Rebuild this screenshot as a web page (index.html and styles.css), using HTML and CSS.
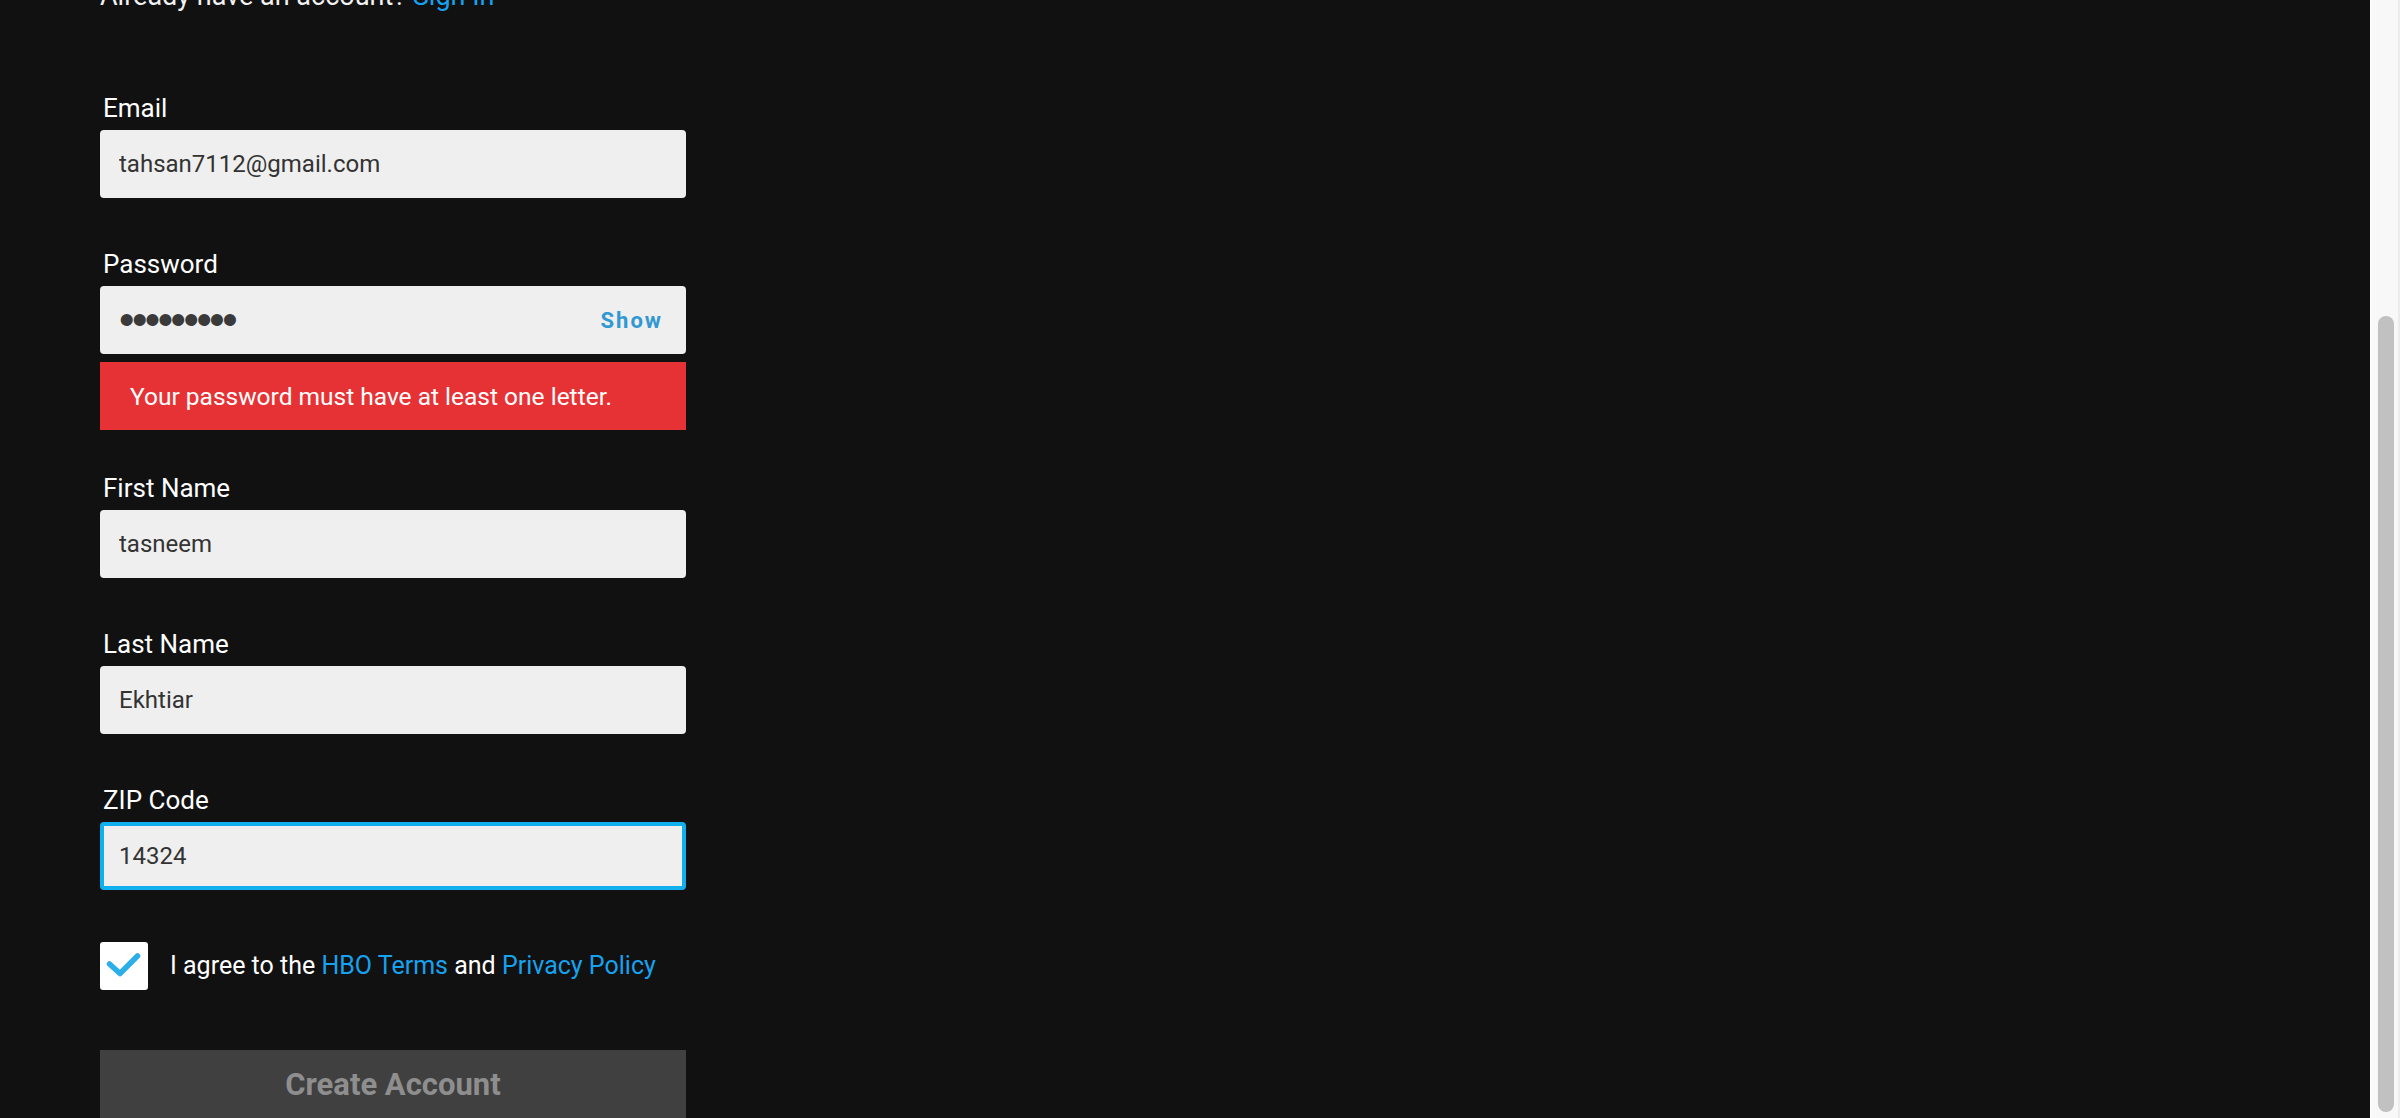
FILE: index.html
```html
<!DOCTYPE html>
<html lang="en">
<head>
<meta charset="utf-8">
<title>Create Your Account</title>
<link rel="stylesheet" href="styles.css">
</head>
<body>
<main class="page">
  <header class="intro">
    <h1 class="title">Create Your Account</h1>
    <p class="signin">Already have an account? <a href="#" class="link">Sign In</a></p>
  </header>
  <form class="form">
    <div class="field">
      <label class="label" for="email">Email</label>
      <input class="input" id="email" type="email" value="tahsan7112@gmail.com">
    </div>
    <div class="field field-error">
      <label class="label" for="password">Password</label>
      <div class="input-box">
        <input class="input input-password" id="password" type="password" value="123456789">
        <button type="button" class="show">Show</button>
      </div>
      <div class="error">Your password must have at least one letter.</div>
    </div>
    <div class="field">
      <label class="label" for="first">First Name</label>
      <input class="input" id="first" type="text" value="tasneem">
    </div>
    <div class="field">
      <label class="label" for="last">Last Name</label>
      <input class="input" id="last" type="text" value="Ekhtiar">
    </div>
    <div class="field field-zip">
      <label class="label" for="zip">ZIP Code</label>
      <input class="input input-focus" id="zip" type="text" value="14324">
    </div>
    <div class="agree">
      <span class="checkbox">
        <svg class="check" viewBox="0 0 48 48" width="48" height="48" aria-hidden="true">
          <path d="M9.5 22 L20 31.5 L37.5 14" fill="none" stroke="#2caeea" stroke-width="5.5" stroke-linecap="round" stroke-linejoin="round"/>
        </svg>
      </span>
      <span class="agree-text">I agree to the <a href="#" class="link">HBO Terms</a> and <a href="#" class="link">Privacy Policy</a></span>
    </div>
    <button class="submit" type="submit" disabled>Create Account</button>
  </form>
</main>
<div class="scrollbar" aria-hidden="true"><div class="scrollbar-thumb"></div></div>
<script src="script.js"></script>
</body>
</html>
```

FILE: styles.css
```css
html {
  background: #111111;
  scrollbar-width: none;
}

html::-webkit-scrollbar {
  display: none;
}

body {
  margin: 0;
  font-family: Roboto, "Liberation Sans", sans-serif;
  color: #ffffff;
}

.scrollbar {
  position: fixed;
  top: 0;
  right: 0;
  bottom: 0;
  width: 30px;
  box-sizing: border-box;
  border-left: 2px solid #fdfdfd;
  border-right: 2px solid #ececec;
  background: #f8f8f8;
}

.scrollbar-thumb {
  position: absolute;
  top: 316px;
  left: 6px;
  width: 16px;
  height: 796px;
  border-radius: 8px;
  background: #c1c1c1;
}

.page {
  width: 586px;
  padding-left: 100px;
}

.intro {
  padding-top: 200px;
}

.title {
  margin: 0 0 145px;
  font-size: 56px;
  line-height: 64px;
  font-weight: 700;
}

.signin {
  margin: 0 0 80px;
  font-size: 27px;
  line-height: 32px;
  color: #f2f2f2;
}

.link {
  color: #17a2ef;
  text-decoration: none;
}

.form {
  display: flex;
  flex-direction: column;
}

.field {
  display: flex;
  flex-direction: column;
  gap: 6px;
  margin-bottom: 50px;
}

.field-error {
  margin-bottom: 42px;
}

.field-zip {
  margin-bottom: 52px;
}

.label {
  padding-left: 3px;
  font-size: 26px;
  line-height: 32px;
  color: #ffffff;
}

.input {
  box-sizing: border-box;
  width: 100%;
  height: 68px;
  margin: 0;
  padding: 0 19px;
  border: 0;
  border-radius: 4px;
  background: #efefef;
  font-family: Roboto, "Liberation Sans", sans-serif;
  font-size: 24px;
  color: #333333;
  outline: none;
}

.input-focus {
  border: 4px solid #10b0ee;
  padding-left: 15px;
}

.input-box {
  display: flex;
  align-items: center;
  height: 68px;
  border-radius: 4px;
  background: #efefef;
}

.input-password {
  flex: 1;
  min-width: 0;
  width: auto;
  padding-left: 19px;
  background: transparent;
  font-family: "Liberation Sans", Roboto, sans-serif;
  font-size: 44px;
  letter-spacing: -2.5px;
  color: #3a3a3a;
}

.show {
  flex: none;
  margin: 0 23px 0 10px;
  padding: 0;
  border: 0;
  background: transparent;
  font-family: Roboto, "Liberation Sans", sans-serif;
  font-size: 22px;
  font-weight: 700;
  letter-spacing: 2px;
  color: #3198d2;
}

.error {
  box-sizing: border-box;
  height: 68px;
  margin-top: 2px;
  padding: 0 30px;
  display: flex;
  align-items: center;
  background: #e73235;
  font-size: 24.5px;
  color: #ffffff;
}

.agree {
  display: flex;
  align-items: center;
  gap: 22px;
  margin-bottom: 60px;
}

.checkbox {
  display: flex;
  width: 48px;
  height: 48px;
  border-radius: 3px;
  background: #ffffff;
}

.check {
  filter: blur(0.6px);
}

.agree-text {
  font-size: 25px;
  line-height: 32px;
  color: #ffffff;
}

.submit {
  display: block;
  width: 100%;
  height: 68px;
  margin: 0;
  padding: 0;
  border: 0;
  background: #404040;
  font-family: Roboto, "Liberation Sans", sans-serif;
  font-size: 31px;
  font-weight: 700;
  color: #8e8e8e;
}
```

FILE: script.js
```js
function scrollToBottom() {
  window.scrollTo(0, document.documentElement.scrollHeight);
}
scrollToBottom();
window.addEventListener('load', scrollToBottom);
```
